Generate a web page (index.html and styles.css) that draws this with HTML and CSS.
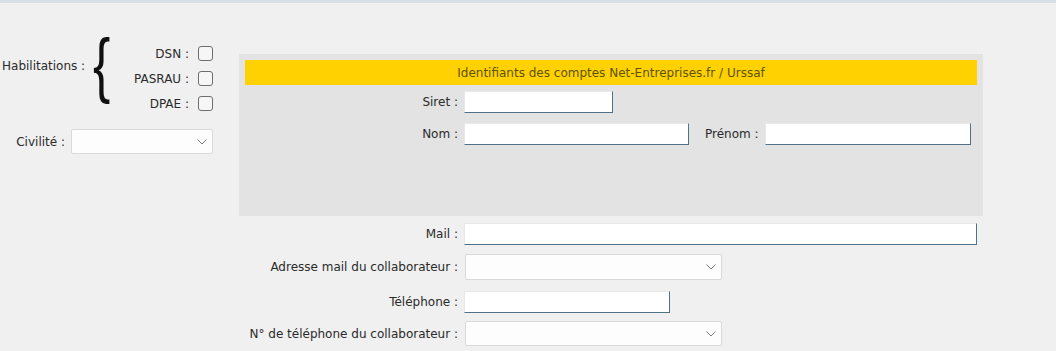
FILE: index.html
```html
<!DOCTYPE html>
<html lang="fr">
<head>
  <meta charset="UTF-8">
  <title>Habilitations</title>
  <link rel="stylesheet" href="styles.css">
</head>
<body>
  <div class="topbar"></div>
  <div class="form">
    <div class="left">
      <div class="habil">
        <span class="habil-label">Habilitations :</span>
        <span class="brace"><span class="brace-glyph">{</span></span>
        <div class="checks">
          <label class="check"><span>DSN :</span><span class="box"></span></label>
          <label class="check"><span>PASRAU :</span><span class="box"></span></label>
          <label class="check"><span>DPAE :</span><span class="box"></span></label>
        </div>
      </div>
      <div class="civ">
        <span class="lbl">Civilité :</span>
        <div class="select civ-select">
          <svg width="10" height="6" viewBox="0 0 10 6"><polyline points="0.5,0.5 5,5 9.5,0.5" fill="none" stroke="#7a7a7a" stroke-width="1"/></svg>
        </div>
      </div>
    </div>

    <div class="right">
      <div class="panel">
        <div class="panel-title">Identifiants des comptes Net-Entreprises.fr / Urssaf</div>
        <div class="row row-siret">
          <span class="lbl">Siret :</span>
          <div class="input w-siret"></div>
        </div>
        <div class="row row-nom">
          <span class="lbl">Nom :</span>
          <div class="input w-nom"></div>
          <span class="lbl-prenom">Prénom :</span>
          <div class="input w-prenom"></div>
        </div>
      </div>

      <div class="row row-mail">
        <span class="lbl">Mail :</span>
        <div class="input w-mail"></div>
      </div>
      <div class="row row-adr">
        <span class="lbl">Adresse mail du collaborateur :</span>
        <div class="select w-sel">
          <svg width="10" height="6" viewBox="0 0 10 6"><polyline points="0.5,0.5 5,5 9.5,0.5" fill="none" stroke="#7a7a7a" stroke-width="1"/></svg>
        </div>
      </div>
      <div class="row row-tel">
        <span class="lbl">Téléphone :</span>
        <div class="input w-tel"></div>
      </div>
      <div class="row row-numtel">
        <span class="lbl">N° de téléphone du collaborateur :</span>
        <div class="select w-sel">
          <svg width="10" height="6" viewBox="0 0 10 6"><polyline points="0.5,0.5 5,5 9.5,0.5" fill="none" stroke="#7a7a7a" stroke-width="1"/></svg>
        </div>
      </div>
    </div>
  </div>
</body>
</html>
```

FILE: styles.css
```css
body {
  margin: 0;
  background-color: #f0f0f0;
  color: #2a2a2a;
  font-family: 'DejaVu Sans', sans-serif;
  font-size: 12px;
  height: 351px;
  overflow: hidden;
}
.topbar {
  height: 3px;
  background-color: #d6e0e6;
}
.form {
  display: flex;
}

/* left column */
.left {
  width: 239px;
  padding-left: 2px;
  box-sizing: border-box;
}
.habil {
  display: flex;
  align-items: flex-start;
  width: 211px;
  margin-top: 30px;
}
.habil-label {
  margin-top: 25px;
  line-height: 16px;
  white-space: nowrap;
}
.brace {
  flex-shrink: 0;
  width: 17px;
  height: 72px;
  margin-left: 8px;
  margin-top: -5px;
  overflow: visible;
}
.brace-glyph {
  display: inline-block;
  font-family: 'Liberation Sans', sans-serif;
  font-size: 72px;
  line-height: 72px;
  color: #111;
  transform: scaleX(0.72);
  transform-origin: left center;
}
.checks {
  flex: 1;
  display: flex;
  flex-direction: column;
  align-items: flex-end;
  margin-top: 8px;
}
.check {
  display: flex;
  align-items: center;
  gap: 9px;
  height: 25px;
  white-space: nowrap;
}
.box {
  width: 13px;
  height: 13px;
  border: 1px solid #6e6e6e;
  border-radius: 3px;
  background-color: #f6f6f6;
}
.civ {
  display: flex;
  align-items: center;
  justify-content: flex-end;
  gap: 6px;
  width: 211px;
  margin-top: 13px;
}

/* fields */
.input {
  height: 22px;
  box-sizing: border-box;
  background-color: #fff;
  border-top: 1px solid #e8e8e8;
  border-left: 1px solid #e8e8e8;
  border-right: 1px solid #4f7288;
  border-bottom: 1px solid #4f7288;
}
.select {
  height: 26px;
  box-sizing: border-box;
  background-color: #fdfdfd;
  border: 1px solid #d9d9d9;
  border-radius: 2px;
  display: flex;
  align-items: center;
  justify-content: flex-end;
  padding-right: 5px;
}
.civ-select {
  width: 142px;
  height: 25px;
}
.w-sel {
  width: 257px;
  margin-left: 1px;
}

/* right column */
.right {
  width: 817px;
  padding-top: 51px;
}
.panel {
  width: 744px;
  height: 162px;
  box-sizing: border-box;
  background-color: #e3e3e3;
  padding: 6px 6px 0 6px;
}
.panel-title {
  height: 25px;
  background-color: #ffd100;
  color: #5c5300;
  display: flex;
  align-items: center;
  justify-content: center;
}
.row {
  display: flex;
  align-items: center;
}
.lbl {
  text-align: right;
  white-space: nowrap;
}
.row .lbl {
  width: 219px;
  margin-right: 6px;
}
.panel .row .lbl {
  width: 213px;
}
.row-siret { margin-top: 6px; }
.row-nom { margin-top: 10px; }
.w-siret { width: 149px; }
.w-nom { width: 225px; }
.lbl-prenom {
  margin-left: 16px;
  margin-right: 6px;
}
.w-prenom { width: 206px; }

.row-mail { margin-top: 7px; }
.w-mail { width: 513px; }
.row-adr { margin-top: 9px; }
.row-tel { margin-top: 11px; }
.w-tel { width: 206px; }
.row-numtel { margin-top: 8px; }
.row-numtel .select { height: 25px; }
```
